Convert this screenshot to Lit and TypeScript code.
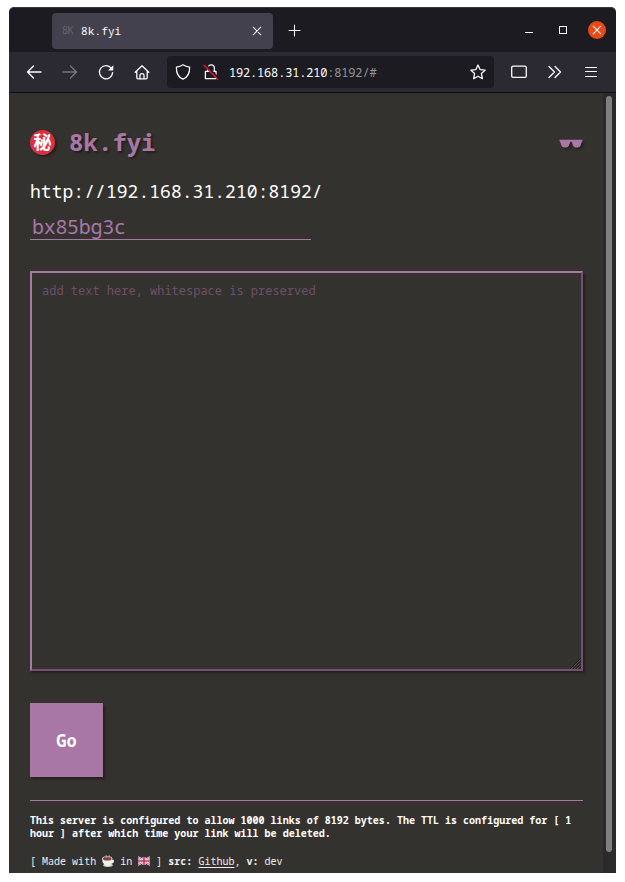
import { LitElement, html, css, svg } from "lit";
import { customElement, property } from "lit/decorators.js";

const line = (d: string, extra = "") => svg`<path d=${d} class=${extra} />`;

const ICONS: Record<string, unknown> = {
  back: line("M15 8H1.5M7.5 2L1.5 8L7.5 14"),
  forward: line("M1 8H14.5M8.5 2L14.5 8L8.5 14"),
  reload: svg`<path d="M13.4 4.4A6.6 6.6 0 1 0 14.6 8.6" /><path class="fill" d="M15.3 1.2V6.4H10Z" />`,
  home: line("M1.2 8.3L8 1.7L14.8 8.3M2.8 7V13.6Q2.8 14.8 4 14.8H12Q13.2 14.8 13.2 13.6V7M6 14.8V11Q6 9.6 8 9.6T10 11V14.8"),
  shield: line("M8 .8C9.8 2 12 2.8 14.6 3.2C14.8 9 12.8 13.2 8 15.2C3.2 13.2 1.2 9 1.4 3.2C4 2.8 6.2 2 8 .8Z"),
  lock: svg`<path d="M4.8 7V4.2A3.3 3.3 0 0 1 11.4 4.2V7M2.4 7.3H13V14.6H2.4Z" /><path class="gap" d="M2.2 .4L15.4 14" /><path class="red" d="M1 1.2L14.6 15.2" />`,
  star: line("M8 1L10.1 5.6L15.1 6.2L11.4 9.6L12.4 14.7L8 12.2L3.6 14.7L4.6 9.6L.9 6.2L5.9 5.6Z"),
  panel: svg`<rect x=".7" y="2.2" width="14.6" height="11.2" rx="1.4" />`,
  more: line("M2 2.5L7.5 8L2 13.5M8 2.5L13.5 8L8 13.5"),
  menu: line("M2.5 3.5H13.5M2.5 7.5H13.5M2.5 12.5H13.5", "thin"),
  close: line("M4.2 4.2L11.8 11.8M11.8 4.2L4.2 11.8", "thin"),
  plus: line("M8.5 3V14M3 8.5H14", "thin"),
  minimize: line("M4 10.5H12", "thin square"),
  maximize: svg`<rect class="thin square" x="4.5" y="4.5" width="7" height="7" />`,
};

@customElement("ui-icon")
export class UiIcon extends LitElement {
  @property() name = "";
  static styles = css`
    :host { display: block; width: 16px; height: 16px; flex: none; }
    svg { display: block; width: 100%; height: 100%; fill: none; stroke: currentColor; stroke-width: 1.3; stroke-linecap: round; stroke-linejoin: round; overflow: visible; }
    .fill { fill: currentColor; stroke: none; }
    .thin { stroke-width: 1.05; }
    .square { stroke-width: 1; stroke-linecap: butt; stroke-linejoin: miter; }
    .gap { stroke: #1c1b22; stroke-width: 1.8; }
    .red { stroke: #e2103c; stroke-width: 1.5; }
  `;
  render() {
    return html`<svg viewBox="0 0 16 16">${ICONS[this.name]}</svg>`;
  }
}

@customElement("browser-chrome")
export class BrowserChrome extends LitElement {
  static styles = css`
    :host { display: block; color: #fbfbfe; font-family: "Noto Sans Mono", "DejaVu Sans Mono", monospace; }
    .tabs { box-sizing: border-box; height: 45px; display: flex; align-items: center; padding: 0 10px 0 43px; background: #1c1b22; border-top: 1px solid #38373a; border-radius: 5px 5px 0 0; }
    .tab { box-sizing: border-box; width: 221px; height: 36px; display: flex; align-items: center; margin-top: 1px; padding: 0 8px 0 10px; border-radius: 4px; background: #42414d; font-size: 11px; }
    .fav { width: 12px; margin-right: 7px; color: #626168; font: 10px/12px "DejaVu Sans Mono", monospace; letter-spacing: -.5px; }
    .label { flex: 1; letter-spacing: .12px; }
    .plus { margin-left: 13px; }
    .min { margin-left: auto; margin-right: 18px; }
    .max { margin-right: 17px; }
    .quit { width: 18px; height: 18px; display: grid; place-items: center; border-radius: 50%; background: #e64a16; }
    .bar { box-sizing: border-box; height: 41px; display: flex; align-items: center; padding: 0 17px; background: #2b2a33; border-bottom: 1px solid #0e0e12; }
    .nav { display: flex; gap: 20px; }
    .dim { color: #77767d; }
    .url { box-sizing: border-box; width: 327px; height: 32px; display: flex; align-items: center; margin-left: 17px; padding: 0 8px; border-radius: 4px; background: #1c1b22; font-size: 12px; letter-spacing: -.18px; }
    .lock { margin: 0 10px 0 12px; }
    .addr { flex: 1; white-space: nowrap; }
    .rest { color: #94939a; }
    .end { display: flex; gap: 20px; margin-left: 17px; }
  `;
  render() {
    return html`
      <div class="tabs">
        <div class="tab"><span class="fav">8K</span><span class="label">8k.fyi</span><ui-icon name="close"></ui-icon></div>
        <ui-icon class="plus" name="plus"></ui-icon>
        <ui-icon class="min" name="minimize"></ui-icon>
        <ui-icon class="max" name="maximize"></ui-icon>
        <div class="quit"><ui-icon name="close"></ui-icon></div>
      </div>
      <div class="bar">
        <div class="nav">
          <ui-icon name="back"></ui-icon><ui-icon class="dim" name="forward"></ui-icon>
          <ui-icon name="reload"></ui-icon><ui-icon name="home"></ui-icon>
        </div>
        <div class="url">
          <ui-icon name="shield"></ui-icon><ui-icon class="lock" name="lock"></ui-icon>
          <span class="addr">192.168.31.210<span class="rest">:8192/#</span></span>
          <ui-icon name="star"></ui-icon>
        </div>
        <div class="end"><ui-icon name="panel"></ui-icon><ui-icon name="more"></ui-icon><ui-icon name="menu"></ui-icon></div>
      </div>`;
  }
}

@customElement("app-root")
export class AppRoot extends LitElement {
  static styles = css`
    :host { display: block; box-sizing: border-box; height: 882px; padding: 7px 9px 9px; background: #fff; font-family: "Noto Sans Mono", "DejaVu Sans Mono", monospace; color: #fff; overflow: hidden; }
    .window { width: 607px; height: 866px; display: flex; flex-direction: column; }
    .view { flex: 1; display: flex; background: #34322e; }
    .page { box-sizing: border-box; flex: 1; min-width: 0; padding: 0 20px 0 21px; }
    .track { box-sizing: border-box; width: 13px; padding: 3px 4px 0 3px; background: #2a2a2a; }
    .thumb { height: 756px; border-radius: 3px; background: #808080; }
    .head { display: flex; align-items: center; height: 28px; margin-top: 36px; }
    .seal { width: 25px; height: 25px; margin-top: -1px; border-radius: 50%; background: #dd2e44; display: grid; place-items: center; font: bold 18px/22px "Noto Sans CJK JP", sans-serif; box-shadow: 2px 2px 2px #24221f; }
    .seal span { height: 25px; }
    h1 { flex: 1; margin: -2px 0 0 14px; font-size: 24px; line-height: 28px; letter-spacing: .06px; color: #a977a6; text-shadow: 2px 2px 2px #22201e; }
    .shades { width: 24px; height: 9px; filter: drop-shadow(2px 2px 1px #24221f); }
    .base { margin-top: 22px; height: 24px; font-size: 18px; line-height: 24px; letter-spacing: .04px; }
    .slug { box-sizing: border-box; width: 281px; height: 28px; margin-top: 9px; padding-left: 2px; border-bottom: 1px solid #a977a6; color: #a977a6; font-size: 20px; letter-spacing: -.3px; line-height: 29px; }
    .area { box-sizing: border-box; position: relative; width: 553px; height: 400px; margin-top: 31px; padding: 9px 10px; border: 2px solid; border-color: #a977a6 #754e72 #754e72 #a977a6; box-shadow: 2px 2px 2px #24221f; color: #6c5069; font-size: 12px; line-height: 17px; }
    .grip { position: absolute; right: 0; bottom: 0; width: 12px; height: 12px; }
    .go { width: 73px; height: 74px; margin-top: 32px; display: grid; place-items: center; background: #a977a6; font-size: 17px; font-weight: bold; box-shadow: 2px 2px 2px #24221f; }
    .foot { margin-top: 23px; border-top: 1px solid #a977a6; padding-top: 13px; font-size: 10px; line-height: 13px; letter-spacing: .015px; }
    .note { font-weight: bold; }
    .made { display: flex; align-items: center; margin-top: 15px; white-space: pre; color: #eee; }
    .emoji { width: 12px; height: 12px; margin: -1px 0 0; }
    .link { text-decoration: underline; text-underline-offset: 2px; }
  `;
  render() {
    return html`
      <div class="window">
        <browser-chrome></browser-chrome>
        <div class="view">
          <main class="page">
            <div class="head">
              <div class="seal"><span>秘</span></div>
              <h1>8k.fyi</h1>
              <svg class="shades" viewBox="0 0 24 9" preserveAspectRatio="none"><path fill="#a977a6" d="M.5 .8H23.5V2.2L22.8 2.8L21.6 6.5Q21 8.6 18.5 8.6H17Q14.8 8.6 14 6.6L12.7 2.8H11.3L10 6.6Q9.2 8.6 7 8.6H5.5Q3 8.6 2.4 6.5L1.2 2.8L.5 2.2Z"/></svg>
            </div>
            <div class="base">http://192.168.31.210:8192/</div>
            <div class="slug">bx85bg3c</div>
            <div class="area">add text here, whitespace is preserved
              <svg class="grip" viewBox="0 0 12 12"><path stroke="#1d1c19" d="M1 12L12 1M4 12L12 4M7 12L12 7M10 12L12 10"/><path stroke="#66645e" stroke-dasharray="1 1" d="M2 12L12 2M5 12L12 5M8 12L12 8"/></svg>
            </div>
            <div class="go">Go</div>
            <div class="foot">
              <div class="note">This server is configured to allow 1000 links of 8192 bytes. The TTL is configured for [ 1 hour ] after which time your link will be deleted.</div>
              <div class="made"><span>[ Made with </span><svg class="emoji" viewBox="0 0 12 12"><ellipse cx="6" cy="10.2" rx="4.8" ry="1.7" fill="#cfcfcf"/><path d="M.3 3.5H10V4.5Q12.2 4.5 12 6.6T9.3 8.7Q8 11.2 5.5 11.2T.5 7Z" fill="#f1eeee"/><ellipse cx="5.3" cy="3.6" rx="5" ry="2.4" fill="#eee"/><ellipse cx="5.3" cy="3.7" rx="4.3" ry="1.9" fill="#7b4638"/><path d="M4 3Q5 2 4 0M7 3Q8 2 7 0" stroke="#aaa" fill="none" stroke-width=".8"/></svg><span> in </span><svg class="emoji" viewBox="0 0 12 12"><path fill="#234a91" d="M0 2H12V10H0Z"/><path d="M0 2L12 10M12 2L0 10" stroke="#fff" stroke-width="2"/><path d="M0 2L12 10M12 2L0 10" stroke="#d22645" stroke-width=".8"/><path d="M6 2V10M0 6H12" stroke="#fff" stroke-width="3"/><path d="M6 2V10M0 6H12" stroke="#d22645" stroke-width="1.6"/></svg><span> ] <b>src:</b> <span class="link">Github</span>, <b>v:</b> dev</span></div>
            </div>
          </main>
          <div class="track"><div class="thumb"></div></div>
        </div>
      </div>`;
  }
}
